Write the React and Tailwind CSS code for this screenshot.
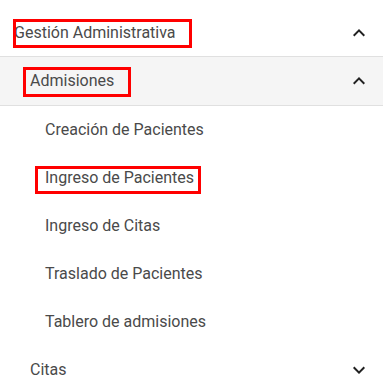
import React from "react"

function ChevronUp() {
  return (
    <svg viewBox="0 0 24 24" className="w-6 h-6 fill-[#212121]">
      <path d="M12 8l-6 6 1.41 1.41L12 10.83l4.59 4.58L18 14z" />
    </svg>
  )
}

function ChevronDown() {
  return (
    <svg viewBox="0 0 24 24" className="w-6 h-6 fill-[#212121]">
      <path d="M16.59 8.59L12 13.17 7.41 8.59 6 10l6 6 6-6z" />
    </svg>
  )
}

// red highlight drawn over a label
function Marked({ children, box }) {
  return (
    <span className="relative">
      {children}
      <span className={"absolute border-[3px] border-[#ff0000] pointer-events-none " + box} />
    </span>
  )
}

const subItems = [
  "Creación de Pacientes",
  "Ingreso de Pacientes",
  "Ingreso de Citas",
  "Traslado de Pacientes",
  "Tablero de admisiones",
]

export default function App() {
  return (
    <div
      className="w-[383px] h-[378px] overflow-hidden bg-white text-[16px] leading-6 text-[#4a4a4a]"
      style={{ fontFamily: "Roboto, 'Liberation Sans', sans-serif" }}
    >
      <div className="h-[10px]" />
      {/* Gestión Administrativa */}
      <div className="flex items-center justify-between h-[47px] pl-[14px] pr-3 border-b border-[#e0e0e0]">
        <Marked box="-top-[2px] -bottom-[3px] -left-[1px] -right-[16px]">Gestión Administrativa</Marked>
        <ChevronUp />
      </div>

      {/* Admisiones */}
      <div className="flex items-center justify-between h-[49px] pl-[30px] pr-3 bg-[#f5f5f5] border-b border-[#e0e0e0]">
        <Marked box="-top-[2px] -bottom-[4px] -left-[7px] -right-[17px]">Admisiones</Marked>
        <ChevronUp />
      </div>

      <ul>
        {subItems.map((item) => (
          <li key={item} className="flex items-center h-12 pl-[45px]">
            {item === "Ingreso de Pacientes" ? (
              <Marked box="-top-[0px] -bottom-[4px] -left-[10px] -right-[7px]">{item}</Marked>
            ) : (
              item
            )}
          </li>
        ))}
      </ul>

      {/* Citas */}
      <div className="flex items-center justify-between h-12 pl-[30px] pr-3">
        <span>Citas</span>
        <ChevronDown />
      </div>
    </div>
  )
}
